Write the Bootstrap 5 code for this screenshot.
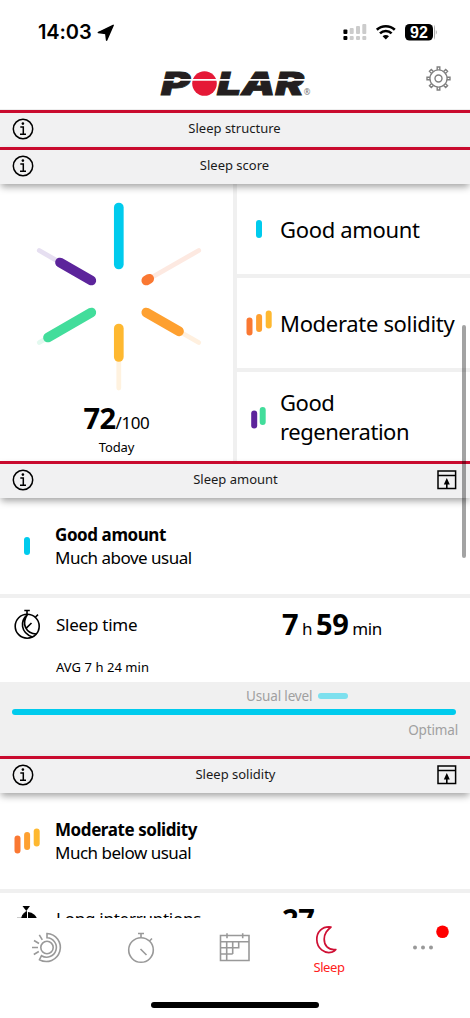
<!DOCTYPE html>
<html lang="en">
<head>
<meta charset="utf-8">
<meta name="viewport" content="width=device-width, initial-scale=1">
<title>Polar – Sleep</title>
<link href="https://cdn.jsdelivr.net/npm/bootstrap@5.3.0/dist/css/bootstrap.min.css" rel="stylesheet">
<style>
  body{font-family:"Noto Sans","Open Sans",sans-serif;color:#000;background:#fff;height:1018px;overflow:hidden}
  svg{display:block;flex:none}
  .phone{width:470px;height:1018px}
  .status{height:62px;padding:1px 29px 0 38px;font-family:Inter,sans-serif}
  .clock{font-size:20px;font-weight:600;line-height:24px;letter-spacing:-.1px}
  .brandbar{height:48px;padding:0 19px 0 160px;border-bottom:1px solid #ededed}
  .feed{height:808px;overflow:hidden}
  .band{height:37px;background:#f1f1f2;border-top:3px solid #c90a2e;padding:0 13px 2px 12px;font-size:13px;z-index:2;color:#1a1a1a;box-shadow:0 4px 7px -1px rgba(0,0,0,.36)}
  .side{width:22px}
  .score{height:277px}
  .pane{width:237px;border-right:4px solid #f0f0f0}
  .points{font-size:29px;font-weight:700;line-height:34px;letter-spacing:-.6px;margin-top:1px}
  .points span{font-size:17px;font-weight:400;letter-spacing:-.4px}
  .today{font-size:13px;line-height:18px;margin-top:-2px;letter-spacing:-.1px}
  .tile{height:94px;border-bottom:4px solid #f0f0f0;padding:0 0 0 6px;font-size:22px;line-height:29px;letter-spacing:-.32px}
  .tile span{padding-left:5px}
  .tile:last-child{height:91px;border:0;padding-bottom:2px;letter-spacing:-.45px}
  .summary{height:100px;border-bottom:4px solid #f0f0f0;padding:0 0 0 11px;font-size:17px;line-height:23px;letter-spacing:-.5px}
  .summary .fw-bold{letter-spacing:-.42px}
  .measure{height:84px;padding:6px 0 0 12px;font-size:17px}
  .name{width:226px;margin-left:14px;margin-top:-4px;letter-spacing:-.25px}
  .value{font-size:29px;font-weight:700;line-height:40px;letter-spacing:-.4px}
  .value span{font-size:17px;font-weight:400;letter-spacing:-.5px}
  .average{font-size:13px;line-height:20px;margin-top:8px;padding-left:44px;letter-spacing:.05px}
  .levels{height:74px;background:#f0f0f0;color:#a0a0a0;font-size:13.5px;letter-spacing:-.15px;padding:4px 12px 0}
  .track{height:6px;background:#00cbed;border-radius:3px}
  .usual{width:30px;height:6px;border-radius:3px;background:#7de0ee;margin-left:6px}
  .tabs{height:100px;background:#fff;padding-top:6px}
  .tab-sleep{font-size:13px;line-height:18px;color:#ff2020;letter-spacing:-.4px}
  .thumb{right:4px;top:325px;width:4px;height:233px;border-radius:2px;background:rgba(0,0,0,.36);z-index:5}
  .home{left:151px;bottom:10px;width:168px;height:6px;border-radius:3px;background:#000}
</style>
</head>
<body>
<svg width="0" height="0" class="position-absolute">
  <symbol id="info" viewBox="0 0 22 22"><circle cx="11" cy="11" r="9.7" fill="none" stroke="#000" stroke-width="1.5"/><circle cx="10.9" cy="5.6" r="1.3"/><path d="M8.3 9h3v7M8 16.2h6" fill="none" stroke="#000" stroke-width="1.5"/></symbol>
  <symbol id="pin" viewBox="0 0 20 20"><path d="M1 1h17.6v17.6H1zM1 5.6h17.6" fill="none" stroke="#000" stroke-width="1.5"/><path d="M9.8 8l3 6.4h-2.2V19H9v-4.6H6.8z"/></symbol>
  <symbol id="one" viewBox="0 0 32 32"><path d="M16 10v12" stroke="#00cbed" stroke-width="6" stroke-linecap="round"/></symbol>
  <symbol id="three" viewBox="0 0 32 32"><g stroke-width="6" stroke-linecap="round"><path d="M6.500 13.500v12" stroke="#fa7832"/><path d="M16.100 10v12" stroke="#fea030"/><path d="M25.700 6.500v12" stroke="#feb830"/></g></symbol>
  <symbol id="two" viewBox="0 0 32 32"><g stroke-width="6" stroke-linecap="round"><path d="M11.200 12.500v12" stroke="#5c249b"/><path d="M19.700 9v12" stroke="#42dd9b"/></g></symbol>
</svg>
<div class="phone position-relative d-flex flex-column">
  <div class="status d-flex align-items-center">
    <span class="clock">14:03</span>
    <svg class="ms-1" width="20" height="20" viewBox="0 0 20 20"><path d="M2.300 10.600 17.200 3.300 10.600 18.100 9.800 11.600z" stroke="#000" stroke-width="1.500" stroke-linejoin="round"/></svg>
    <svg class="ms-auto" width="98" height="22" viewBox="0 0 98 22">
      <g fill="#ccc"><rect x="6.700" y="7" width="4" height="6" rx="1"/><rect x="13" y="5" width="4" height="8" rx="1"/><rect x="19.300" y="3" width="4" height="10" rx="1"/><rect x="6.700" y="15" width="4" height="4" rx="1"/><rect x="13" y="15" width="4" height="4" rx="1"/><rect x="19.300" y="15" width="4" height="4" rx="1"/></g>
      <rect x="0.400" y="8.400" width="4" height="4.700" rx="1"/><rect x="0.400" y="15" width="4" height="4" rx="1"/>
      <g fill="none" stroke="#000" stroke-width="2.600"><path d="M33.800 8.800a13 13 0 0 1 18 0"/><path d="M37 12.400a8.300 8.300 0 0 1 11.600 0"/></g><path d="M39.600 15.300a4.600 4.600 0 0 1 6.400 0l-3.200 3.300z"/>
      <rect x="62" y="3" width="28" height="16.500" rx="4.500"/><path d="M91 3.800q1 1.500 1 3.500v8q0 2-1 3.500z" fill="#aaa"/><path d="M92.800 9q2 2.200 0 4.700z" fill="#aaa"/>
      <text x="76" y="17" text-anchor="middle" font-family="Liberation Sans" font-size="16" font-weight="700" fill="#fff">92</text>
    </svg>
  </div>
  <div class="brandbar d-flex align-items-center justify-content-between">
    <svg width="152" height="40" viewBox="0 -6 152 40" overflow="visible" style="margin-top:-3px" aria-label="POLAR">
      <g font-family="Inter" font-weight="900" font-style="italic" font-size="31" fill="#231f20" stroke="#231f20" stroke-width=".8">
        <text x="1" y="25" textLength="29" lengthAdjust="spacingAndGlyphs">P</text>
        <text x="57" y="25" textLength="87" lengthAdjust="spacingAndGlyphs">LAR</text>
      </g>
      <circle cx="44.500" cy="13.500" r="12.300" fill="#e51937"/>
      <path d="M0 9.900h145" stroke="#fff" stroke-width="1.700"/>
      <text x="147" y="24.500" text-anchor="middle" font-family="Noto Sans" font-size="8" fill="#777">®</text>
    </svg>
    <svg width="25" height="25" viewBox="0 0 25 25" fill="none" stroke="#808080" stroke-width="1.400" style="margin-top:-15px">
      <circle cx="12.500" cy="12.500" r="8.600"/><circle cx="12.500" cy="12.500" r="3.500"/>
      <g id="teeth"><path id="tooth" d="M11.200 4V1h2.600v3"/><use href="#tooth" transform="rotate(45 12.500 12.500)"/><use href="#tooth" transform="rotate(90 12.500 12.500)"/><use href="#tooth" transform="rotate(135 12.500 12.500)"/></g><use href="#teeth" transform="rotate(180 12.500 12.500)"/>
    </svg>
  </div>

  <main class="feed">
    <div class="band position-relative d-flex align-items-center justify-content-between"><svg class="side" height="22"><use href="#info"/></svg><span>Sleep structure</span><span class="side"></span></div>
    <div class="band position-relative d-flex align-items-center justify-content-between"><svg class="side" height="22"><use href="#info"/></svg><span>Sleep score</span><span class="side"></span></div>

    <section class="score d-flex">
      <div class="pane text-center">
        <svg width="233" height="216" viewBox="0 184 233 216" fill="none" stroke-linecap="round">
          <g stroke-width="4.800"><path d="M146.300 280.500l52.400-30" stroke="#fde9e1"/><path d="M91.300 280.500l-52-30" stroke="#e6dff1"/><path d="M91.300 312.500l-52 30" stroke="#e2f9ef"/><path d="M146.300 312.500l52.400 30" stroke="#fff0df"/><path d="M118.800 330v58" stroke="#fff2df"/></g>
          <g stroke-width="9.700"><path d="M118.800 207.500v57" stroke="#00cbed"/><path d="M146.300 280.500l2.900-1.700" stroke="#fa7832"/><path d="M91.300 280.500L60 262.500" stroke="#5c249b"/><path d="M91.300 312.500l-43.300 25" stroke="#42dd9b"/><path d="M146.300 312.500l32.700 18.800" stroke="#fea030"/><path d="M118.800 328.500v28.500" stroke="#feb830"/></g>
        </svg>
        <div class="points">72<span>/100</span></div>
        <div class="today">Today</div>
      </div>
      <div class="flex-fill">
        <div class="tile d-flex align-items-center"><svg width="32" height="32"><use href="#one"/></svg><span>Good amount</span></div>
        <div class="tile d-flex align-items-center"><svg width="32" height="32"><use href="#three"/></svg><span class="text-nowrap">Moderate solidity</span></div>
        <div class="tile d-flex align-items-center"><svg width="32" height="32"><use href="#two"/></svg><span>Good<br>regeneration</span></div>
      </div>
    </section>

    <div class="band position-relative d-flex align-items-center justify-content-between"><svg class="side" height="22"><use href="#info"/></svg><span>Sleep amount</span><svg width="20" height="20"><use href="#pin"/></svg></div>
    <section class="summary d-flex align-items-center"><svg width="32" height="32"><use href="#one"/></svg><div class="ms-2 ps-1"><div class="fw-bold">Good amount</div><div>Much above usual</div></div></section>
    <section class="measure">
      <div class="d-flex align-items-center">
        <svg width="30" height="32" viewBox="0 0 30 32" fill="none" stroke="#000" stroke-width="1.600" style="margin-top:-5px"><circle cx="15.200" cy="18.200" r="12"/><path d="M12.300 2.500h5.500M15 3v4M23.500 9l2.500-2.400"/><path d="M15.400 6.500C7.800 13 8.500 25 20.500 29M15.400 6.500C9 16 14 25.500 24.500 26M14.500 19.800l5-4.800"/></svg>
        <div class="name">Sleep time</div>
        <div class="value">7<span> h </span>59<span> min</span></div>
      </div>
      <div class="average">AVG 7 h 24 min</div>
    </section>
    <section class="levels">
      <div class="d-flex align-items-center" style="padding-left:234px;line-height:20px">Usual level<div class="usual"></div></div>
      <div class="track" style="margin-top:3px;margin-right:2px"></div>
      <div class="text-end" style="line-height:20px;margin-top:5px">Optimal</div>
    </section>

    <div class="band position-relative d-flex align-items-center justify-content-between"><svg class="side" height="22"><use href="#info"/></svg><span>Sleep solidity</span><svg width="20" height="20"><use href="#pin"/></svg></div>
    <section class="summary d-flex align-items-center"><svg width="32" height="32"><use href="#three"/></svg><div class="ms-2 ps-1"><div class="fw-bold">Moderate solidity</div><div>Much below usual</div></div></section>
    <section class="measure">
      <div class="d-flex align-items-center">
        <svg width="30" height="32" viewBox="0 0 30 32" style="margin-top:-5px"><path d="M10.500 5h7.500l-3.700 5z"/><path d="M16 11a10 10 0 0 1 9.500 9H16z"/><path d="M14.500 10.500a10 10 0 0 0-5 8h5zM5 17.300h4" stroke="#000"/></svg>
        <div class="name" style="margin-top:0">Long interruptions</div>
        <div class="value">27</div>
      </div>
    </section>
  </main>

  <nav class="tabs d-flex">
    <div class="col d-flex justify-content-center pt-2"><svg width="32" height="32" viewBox="0 0 32 32" fill="none" stroke="#999" stroke-width="1.600"><circle cx="16" cy="15.500" r="6.200"/><path d="M16 1.500a14 14 0 1 1-7.500 26.200l2-4A9.700 9.700 0 1 0 16 5.800zM1 15.500h6M3 8.500l5 3M2.800 22.500l5-3M8.300 2.800l3 5"/></svg></div>
    <div class="col d-flex justify-content-center pt-2"><svg width="32" height="32" viewBox="0 0 32 32" fill="none" stroke="#999" stroke-width="1.600"><circle cx="16" cy="18" r="12.300"/><path d="M13 1.500h6M16 1.500v4M24.500 9l2.500-2.500M15.500 17l6 6"/></svg></div>
    <div class="col d-flex justify-content-center pt-2"><svg width="32" height="32" viewBox="0 0 32 32" fill="none" stroke="#999" stroke-width="1.600"><path d="M1.500 3.500h28.500V28.500H1.500zM1.500 9.700H30M1.500 15.800h18.200V9.700M1.500 22h12.200M7.700 9.700v18.800M13.700 9.700V22M8 1.200v5M23.700 1.200v5"/></svg></div>
    <div class="col d-flex flex-column align-items-center"><svg width="28" height="32" viewBox="-1 0 28 32" fill="none" stroke="#cf1034" stroke-width="1.700" stroke-linejoin="round"><path d="M15 3C6 2 .7 8 .8 15.500c.2 9 7.700 14.500 15 12.700 2-.6 3.200-1.400 4-2.700C12 26.500 8 21 8.200 15c.2-6 3-8.700 6.800-12z"/></svg><span class="tab-sleep" style="margin-top:2px">Sleep</span></div>
    <div class="col d-flex justify-content-center"><svg width="52" height="32" viewBox="-2 0 52 32"><g fill="#999"><circle cx="16" cy="23.500" r="2"/><circle cx="24" cy="23.500" r="2"/><circle cx="32" cy="23.500" r="2"/></g><circle cx="43.500" cy="7.800" r="6.300" fill="#f00"/></svg></div>
  </nav>
  <div class="thumb position-absolute"></div>
  <div class="home position-absolute"></div>
</div>
<script src="https://cdn.jsdelivr.net/npm/bootstrap@5.3.0/dist/js/bootstrap.bundle.min.js"></script>
</body>
</html>
